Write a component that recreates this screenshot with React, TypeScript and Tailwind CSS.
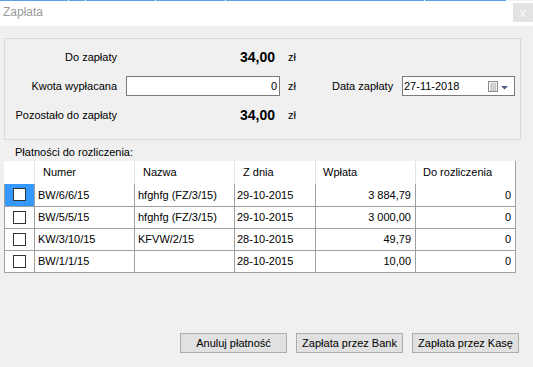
import React from "react";

const rows = [
  { nr: "BW/6/6/15", name: "hfghfg (FZ/3/15)", date: "29-10-2015", amount: "3 884,79", left: "0" },
  { nr: "BW/5/5/15", name: "hfghfg (FZ/3/15)", date: "29-10-2015", amount: "3 000,00", left: "0" },
  { nr: "KW/3/10/15", name: "KFVW/2/15", date: "28-10-2015", amount: "49,79", left: "0" },
  { nr: "BW/1/1/15", name: "", date: "28-10-2015", amount: "10,00", left: "0" },
];

function Checkbox() {
  return <div className="w-[13px] h-[13px] border border-[#333333] bg-white mx-auto" />;
}

function CalendarIcon() {
  return (
    <svg width="20" height="11" viewBox="0 0 20 11">
      <rect x="0.5" y="0.5" width="9" height="10" fill="#f4f4f4" stroke="#8c8c8c" />
      <path d="M2 3h6M2 5h6M2 7h6M2 9h6M3.5 2v8M5.5 2v8M7.5 2v8" stroke="#c4c4c4" strokeWidth="1" />
      <path d="M13 5h7l-3.5 3.5z" fill="#4d5d7f" />
    </svg>
  );
}

export default function App() {
  const gaps = [68, 85, 155, 225, 424];
  return (
    <div
      className="w-[533px] h-[367px] bg-[#f0f0f0] flex flex-col overflow-hidden text-[11px] text-black"
      style={{ fontFamily: '"Liberation Sans", Arial, sans-serif' }}
    >
      {/* top accent line */}
      <div className="h-[1px] w-[506px] bg-[#5a9fe8] relative">
        {gaps.map((g) => (
          <span key={g} className="absolute top-0 w-[1px] h-[1px] bg-white" style={{ left: g }} />
        ))}
      </div>

      {/* title bar */}
      <div className="h-[25px] bg-white flex justify-between items-start">
        <span className="pl-[3px] pt-[4px] text-[12px] text-[#9a9a9a] leading-[15px]">Zapłata</span>
        <div className="mt-[2px] w-[20px] h-[19px] bg-[#e3e3e3] flex items-center justify-center text-[#f6f6f6] font-bold text-[12px]">
          x
        </div>
      </div>

      {/* summary group */}
      <div className="mt-[12px] ml-[4px] w-[517px] h-[102px] border border-[#d9d9d9] pt-[8px] flex flex-col gap-[9px]">
        <div className="flex items-center h-[20px]">
          <span className="w-[112px] text-right">Do zapłaty</span>
          <span className="ml-[9px] w-[154px] text-right pr-[5px] font-bold text-[14px]">34,00</span>
          <span className="ml-[8px]">zł</span>
        </div>
        <div className="flex items-center h-[20px]">
          <span className="w-[112px] text-right">Kwota wypłacana</span>
          <div className="ml-[9px] w-[154px] h-[20px] border border-[#7a7a7a] bg-white flex items-center justify-end pr-[2px]">
            0
          </div>
          <span className="ml-[8px] w-[44px]">zł</span>
          <span className="w-[70px]">Data zapłaty</span>
          <div className="w-[113px] h-[20px] border border-[#7a7a7a] bg-white flex items-center justify-between pl-[1px] pr-[6px]">
            <span>27-11-2018</span>
            <CalendarIcon />
          </div>
        </div>
        <div className="flex items-center h-[20px]">
          <span className="w-[112px] text-right">Pozostało do zapłaty</span>
          <span className="ml-[9px] w-[154px] text-right pr-[5px] font-bold text-[14px]">34,00</span>
          <span className="ml-[8px]">zł</span>
        </div>
      </div>

      <div className="mt-[5px] pl-[15px] h-[16px] leading-[14px]">Płatności do rozliczenia:</div>

      {/* payments grid */}
      <table className="ml-[4px] border-collapse table-fixed w-[511px] bg-white">
        <colgroup>
          <col className="w-[30px]" />
          <col className="w-[100px]" />
          <col className="w-[100px]" />
          <col className="w-[81px]" />
          <col className="w-[100px]" />
          <col className="w-[100px]" />
        </colgroup>
        <thead>
          <tr className="h-[23px]">
            <th className="border-r border-[#e4e4e4] p-0" />
            <th className="border-r border-[#e4e4e4] font-normal text-left pl-[8px]">Numer</th>
            <th className="border-r border-[#e4e4e4] font-normal text-left pl-[8px]">Nazwa</th>
            <th className="border-r border-[#e4e4e4] font-normal text-left pl-[8px]">Z dnia</th>
            <th className="border-r border-[#e4e4e4] font-normal text-left pl-[7px]">Wpłata</th>
            <th className="border-r border-[#a0a0a0] font-normal text-left pl-[7px]">Do rozliczenia</th>
          </tr>
        </thead>
        <tbody>
          {rows.map((r, i) => (
            <tr key={r.nr} className="h-[22px]">
              <td className={`border border-[#a0a0a0] border-t-0 p-0 ${i === 0 ? "bg-[#3399ff]" : ""}`}>
                <Checkbox />
              </td>
              <td className="border-b border-r border-[#a0a0a0] pl-[3px]">{r.nr}</td>
              <td className="border-b border-r border-[#a0a0a0] pl-[3px]">{r.name}</td>
              <td className="border-b border-r border-[#a0a0a0] pl-[2px]">{r.date}</td>
              <td className="border-b border-r border-[#a0a0a0] text-right pr-[4px]">{r.amount}</td>
              <td className="border-b border-r border-[#a0a0a0] text-right pr-[4px]">{r.left}</td>
            </tr>
          ))}
        </tbody>
      </table>

      {/* actions */}
      <div className="mt-auto mb-[14px] flex justify-end gap-[9px] pr-[14px]">
        {["Anuluj płatność", "Zapłata przez Bank", "Zapłata przez Kasę"].map((t) => (
          <button
            key={t}
            className="w-[107px] h-[20px] bg-[#e1e1e1] border border-[#adadad] text-[11px] text-black flex items-center justify-center"
          >
            {t}
          </button>
        ))}
      </div>
    </div>
  );
}
